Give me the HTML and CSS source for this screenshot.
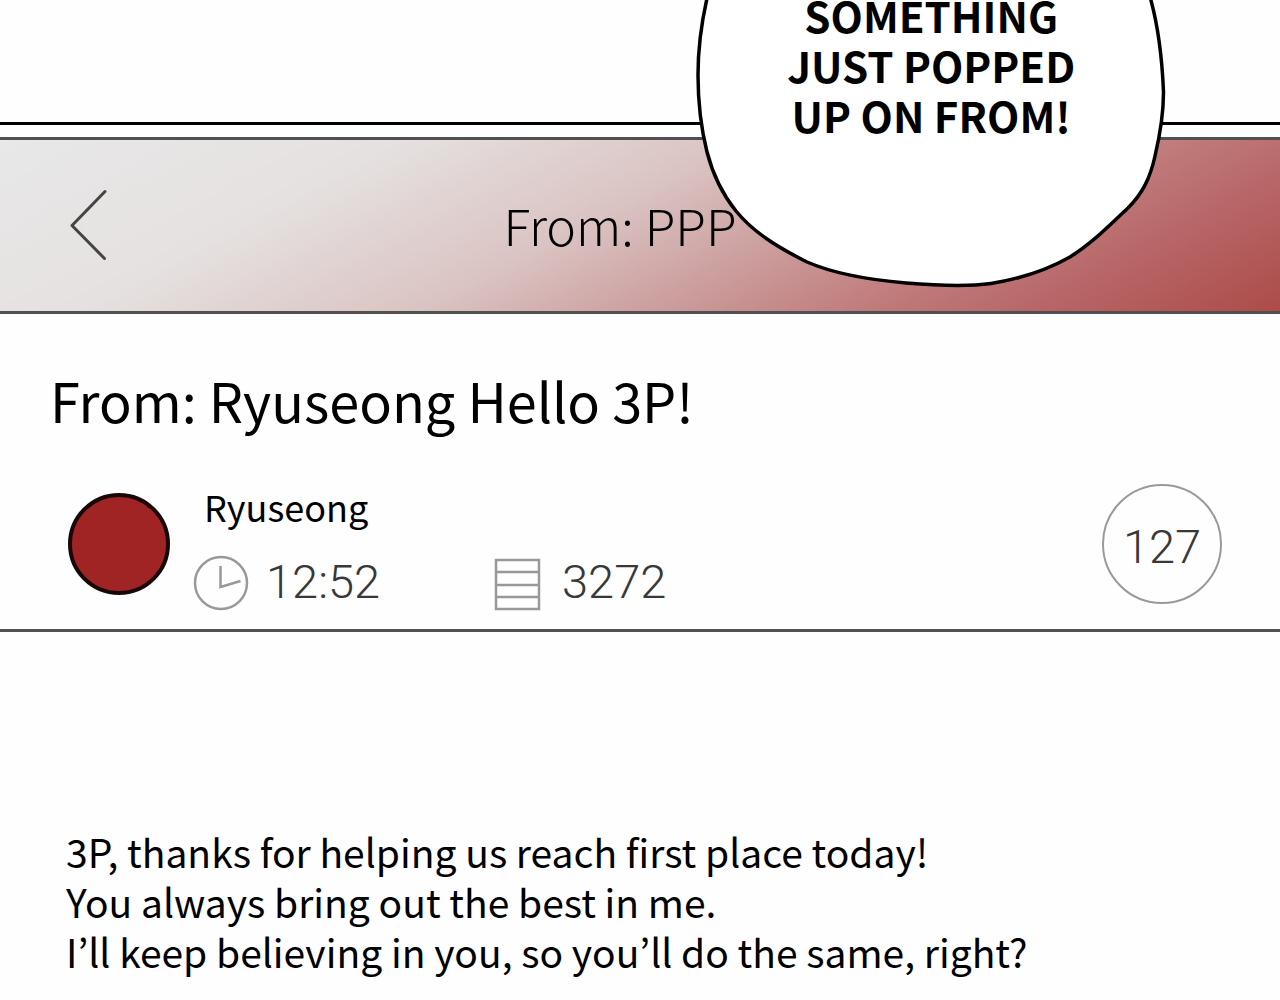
FILE: index.html
```html
<!DOCTYPE html>
<html lang="en">
<head>
<meta charset="utf-8">
<title>From: PPP</title>
<link rel="stylesheet" href="styles.css">
</head>
<body>
<div class="panel-edge"></div>
<header class="topbar">
  <button class="back" type="button" aria-label="Back">
    <svg width="42" height="74" viewBox="0 0 42 74" fill="none" stroke="#444" stroke-width="3" stroke-linecap="round" stroke-linejoin="round"><path d="M37 4.500 4 38.500 36.500 71.500"/></svg>
  </button>
  <h1 class="title">From: PPP</h1>
</header>
<main>
  <section class="post-head">
    <h2 class="subject">From: Ryuseong Hello 3P!</h2>
    <div class="byline">
      <span class="avatar"></span>
      <div class="details">
        <span class="author">Ryuseong</span>
        <div class="stats">
          <span class="stat time">
            <svg width="52" height="56" viewBox="0 0 52 56" overflow="visible" fill="none" stroke="#999" stroke-width="2.500"><circle cx="27" cy="29" r="26"/><path d="M26.500 12v21l20-6"/></svg>
            <span class="figure">12:52</span>
          </span>
          <span class="stat views">
            <svg width="48" height="54" viewBox="0 0 48 54" overflow="visible" fill="none" stroke="#999" stroke-width="2.500"><path d="M2 5h43v49h-43zM2 17h43M2 30h43M2 42h43"/></svg>
            <span class="figure">3272</span>
          </span>
        </div>
      </div>
      <span class="count">127</span>
    </div>
  </section>
  <p class="message">3P, thanks for helping us reach first place today!<br>You always bring out the best in me.<br>I’ll keep believing in you, so you’ll do the same, right?</p>
</main>
<aside class="bubble">
  <svg class="outline" width="480" height="300" viewBox="690 0 480 300" fill="#fff" stroke="#000" stroke-width="3.500"><path d="M708-10C701 18 697 45 697 75C697 105 700 128 706 152C712 175 722 195 735 211C752 232 776 247 806 262C836 275 870 280 905 283C935 285.500 965 287 990 283.500C1018 279 1046 270 1069 257C1090 244 1107 227 1127 208C1141 194 1149 179 1154 156C1159 135 1162.500 115 1162.500 92C1161 55 1157 22 1147-10"/></svg>
  <p class="speech">SOMETHING<br>JUST POPPED<br>UP ON FROM!</p>
</aside>
</body>
</html>
```
FILE: styles.css
```css
* { box-sizing: border-box; }

body {
  margin: 0;
  position: relative;
  overflow-x: hidden;
  background: #fefefe;
  color: #000;
  font-family: "Noto Sans CJK KR", "Noto Sans", sans-serif;
}

h1, h2, p { margin: 0; font-weight: 400; }

.panel-edge {
  height: 125px;
  margin-bottom: 12px;
  border-bottom: 3px solid #000;
}

.topbar {
  display: grid;
  grid-template-columns: 1fr auto 1fr;
  align-items: center;
  height: 177px;
  padding: 0 108px 4px 68px;
  border-top: 3px solid #505050;
  border-bottom: 3px solid #505050;
  background: linear-gradient(152deg, #e8e8e8 0%, #e5e1e0 25%, #dac4c3 46%, #cb9a9a 62%, #c07b7b 74%, #b86769 84%, #ac4c49 100%);
}

.back {
  justify-self: start;
  display: flex;
  padding: 0;
  border: 0;
  background: none;
}

.title {
  font-size: 50px;
  line-height: 60px;
  font-weight: 300;
  white-space: nowrap;
}

.post-head {
  padding: 46px 58px 19px 50px;
  border-bottom: 3px solid #505050;
}

.subject {
  font-size: 54px;
  line-height: 80px;
}

.byline {
  display: flex;
  align-items: center;
  gap: 24px;
  margin-top: 38px;
  padding-left: 18px;
}

.avatar {
  width: 102px;
  height: 102px;
  border: 4px solid #180808;
  border-radius: 50%;
  background: #a02423;
}

.details { flex: 1; }

.author {
  display: block;
  padding-left: 10px;
  font-size: 36px;
  line-height: 56px;
}

.stats { display: flex; margin-top: 20px; }

.stat {
  display: flex;
  align-items: center;
  gap: 20px;
}

.time { width: 300px; }

.figure, .count {
  color: #383838;
  font-family: Roboto, sans-serif;
  font-size: 47px;
  line-height: 56px;
  font-weight: 300;
}

.count {
  display: grid;
  place-items: center;
  width: 120px;
  height: 120px;
  padding-top: 6px;
  border: 2px solid #999;
  border-radius: 50%;
}

.message {
  padding: 194px 66px 20px;
  font-size: 39px;
  line-height: 50px;
}

.bubble {
  position: absolute;
  top: 0;
  left: 54%;
  width: 480px;
}

.outline { display: block; }

.speech {
  position: absolute;
  top: -10px;
  left: 0;
  width: 100%;
  font-size: 42px;
  line-height: 50px;
  font-weight: 700;
  text-align: center;
  white-space: nowrap;
}
```
